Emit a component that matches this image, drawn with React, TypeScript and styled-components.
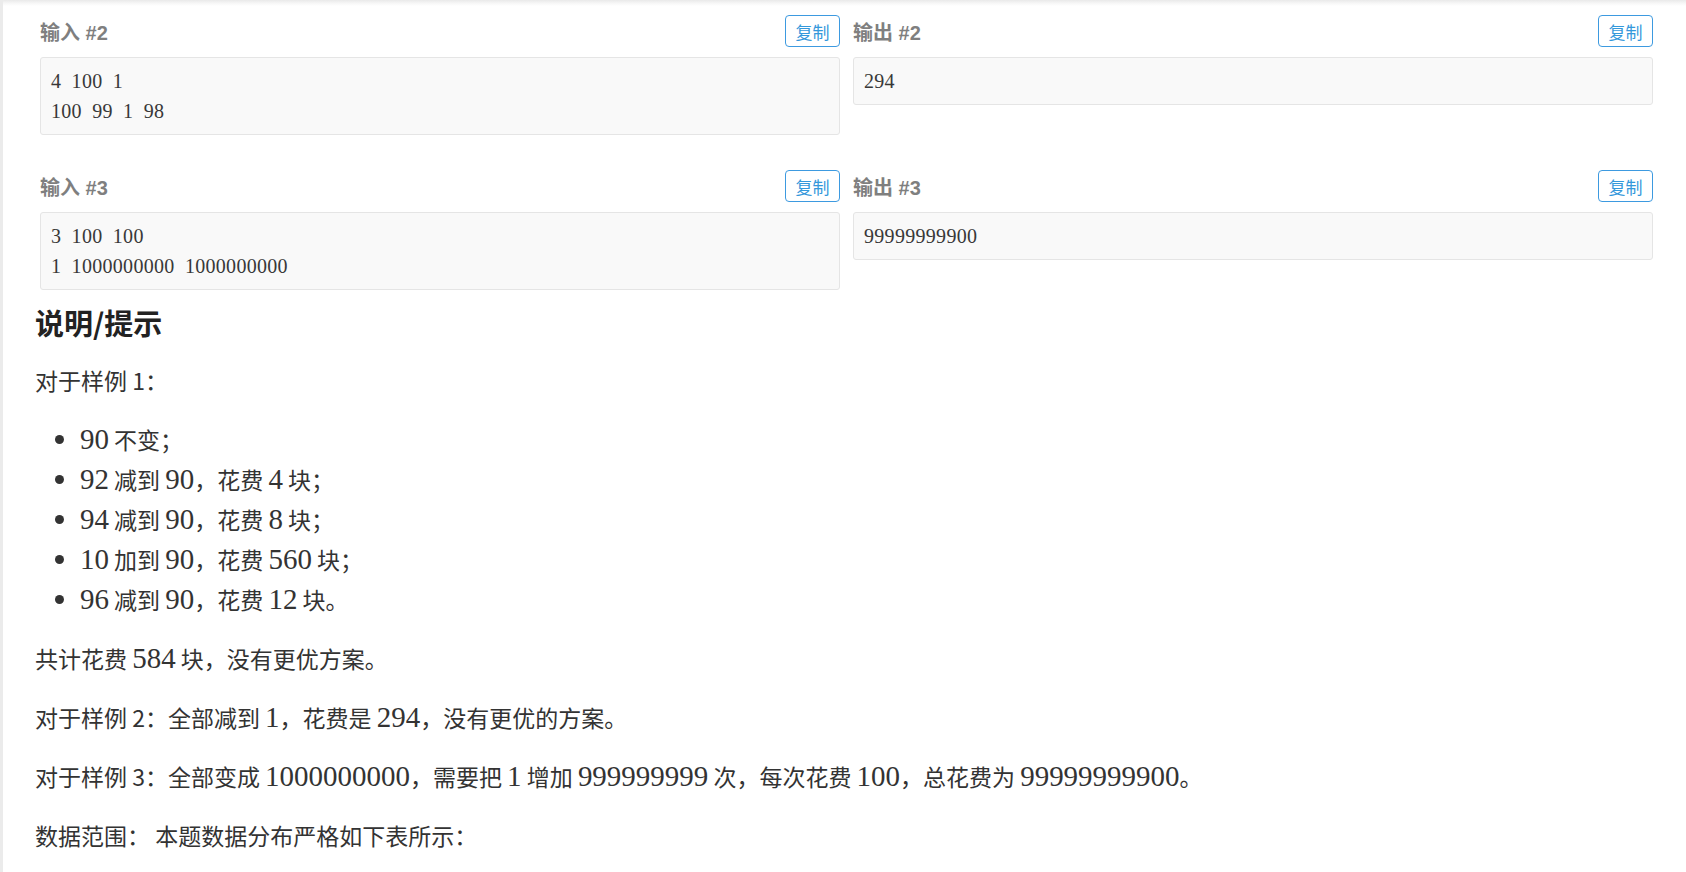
import React from 'react';
import styled, { createGlobalStyle } from 'styled-components';

const GlobalStyle = createGlobalStyle`
  html, body {
    margin: 0;
    padding: 0;
    background: #fff;
  }
  body {
    font-family: 'Noto Sans CJK SC', 'Liberation Sans', sans-serif;
    color: #333;
  }
`;

const Page = styled.div`
  min-height: 100vh;
  box-sizing: border-box;
  border-left: 3px solid #ebebeb;
  background: linear-gradient(to bottom, #e9e9e9 0, #f6f6f6 3px, #fff 6px);
  padding: 15px 28px 0 32px;
`;

const SampleGrid = styled.div`
  display: grid;
  grid-template-columns: 1fr 1fr;
  column-gap: 13px;
  row-gap: 35px;
  margin: 0 5px;
  align-items: start;
`;

const Cell = styled.div`
  display: flex;
  flex-direction: column;
  gap: 10px;
`;

const CellHeader = styled.div`
  display: flex;
  align-items: center;
  justify-content: space-between;
  height: 32px;
`;

const CellTitle = styled.h3`
  margin: 0;
  font-family: 'Liberation Sans', 'Noto Sans CJK SC', sans-serif;
  font-size: 20px;
  font-weight: 700;
  color: #7f7f7f;
`;

const CopyButton = styled.button`
  display: inline-flex;
  align-items: center;
  justify-content: center;
  box-sizing: border-box;
  height: 32px;
  width: 55px;
  padding: 0;
  border: 1px solid #3d9ae0;
  border-radius: 4px;
  background: #fff;
  color: #3498db;
  font-family: 'Noto Sans CJK SC', sans-serif;
  font-size: 17px;
  cursor: pointer;
`;

const CodeBox = styled.pre`
  margin: 0;
  padding: 8px 10px;
  background: #f9f9f9;
  border: 1px solid #e5e5e5;
  border-radius: 3px;
  font-family: 'Liberation Serif', 'Noto Sans CJK SC', serif;
  font-size: 20px;
  line-height: 30px;
  letter-spacing: 0.3px;
  word-spacing: 5px;
  color: #383838;
  white-space: pre;
`;

const Heading = styled.h2`
  margin: 14px 0 20px;
  font-size: 29px;
  line-height: 36px;
  font-weight: 700;
  color: #222;
`;

const Para = styled.p`
  margin: 0 0 19px;
  font-size: 23px;
  line-height: 40px;
  color: #333;
`;

const List = styled.ul`
  margin: 0 0 19px;
  padding-left: 45px;
  font-size: 23px;
  line-height: 40px;
  color: #333;
`;

const Math = styled.span`
  font-family: 'Liberation Serif', serif;
  font-size: 1.26em;
  line-height: 1;
`;

interface Sample {
  id: number;
  input: string[];
  output: string[];
}

const samples: Sample[] = [
  { id: 2, input: ['4 100 1', '100 99 1 98'], output: ['294'] },
  { id: 3, input: ['3 100 100', '1 1000000000 1000000000'], output: ['99999999900'] },
];

const SampleCell = ({ title, lines }: { title: string; lines: string[] }) => (
  <Cell>
    <CellHeader>
      <CellTitle>{title}</CellTitle>
      <CopyButton>复制</CopyButton>
    </CellHeader>
    <CodeBox>{lines.join('\n')}</CodeBox>
  </Cell>
);

const App = () => {
  return (
    <Page>
      <GlobalStyle />
      <SampleGrid>
        {samples.map((s) => (
          <React.Fragment key={s.id}>
            <SampleCell title={`输入 #${s.id}`} lines={s.input} />
            <SampleCell title={`输出 #${s.id}`} lines={s.output} />
          </React.Fragment>
        ))}
      </SampleGrid>

      <Heading>说明/提示</Heading>
      <Para>对于样例 1：</Para>
      <List>
        <li>
          <Math>90</Math> 不变；
        </li>
        <li>
          <Math>92</Math> 减到 <Math>90</Math>，花费 <Math>4</Math> 块；
        </li>
        <li>
          <Math>94</Math> 减到 <Math>90</Math>，花费 <Math>8</Math> 块；
        </li>
        <li>
          <Math>10</Math> 加到 <Math>90</Math>，花费 <Math>560</Math> 块；
        </li>
        <li>
          <Math>96</Math> 减到 <Math>90</Math>，花费 <Math>12</Math> 块。
        </li>
      </List>
      <Para>
        共计花费 <Math>584</Math> 块，没有更优方案。
      </Para>
      <Para>
        对于样例 2：全部减到 <Math>1</Math>，花费是 <Math>294</Math>，没有更优的方案。
      </Para>
      <Para>
        对于样例 3：全部变成 <Math>1000000000</Math>，需要把 <Math>1</Math> 增加{' '}
        <Math>999999999</Math> 次，每次花费 <Math>100</Math>，总花费为{' '}
        <Math>99999999900</Math>。
      </Para>
      <Para>数据范围： 本题数据分布严格如下表所示：</Para>
    </Page>
  );
};

export default App;
